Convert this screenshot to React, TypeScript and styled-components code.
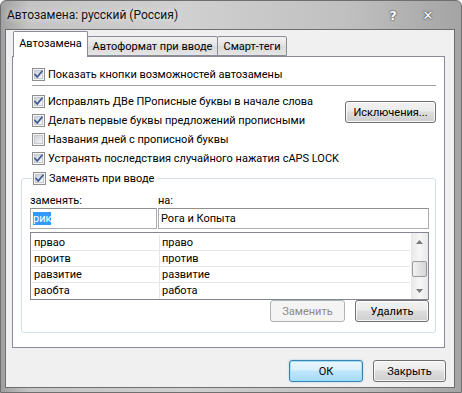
import React from "react";
import styled, { createGlobalStyle, css } from "styled-components";

const GlobalStyle = createGlobalStyle`
  html, body {
    margin: 0;
    padding: 0;
    background: #ffffff;
  }
  body {
    font-family: Roboto, "Noto Sans", "Liberation Sans", sans-serif;
    font-size: 11px;
    color: #000;
  }
`;

const Window = styled.div`
  width: 462px;
  height: 393px;
  box-sizing: border-box;
  display: flex;
  flex-direction: column;
  background: linear-gradient(90deg, #a0a0a0 0%, #c4c4c4 6%, #d0d0d0 40%, #c0c0c0 75%, #a4a4a4 100%);
  border: 1px solid #6f6f6f;
  border-radius: 6px 6px 0 0;
`;

const TitleBar = styled.div`
  height: 28px;
  display: flex;
  align-items: center;
  padding-left: 6px;
  padding-right: 10px;
`;

const TitleText = styled.div`
  flex: 1;
  font-size: 12px;
  color: #111;
  text-shadow: 0 0 6px rgba(255, 255, 255, 0.9);
`;

const TitleButton = styled.div<{ $w: number }>`
  width: ${(p) => p.$w}px;
  text-align: center;
  color: #fff;
  font-family: "DejaVu Sans", sans-serif;
  font-weight: bold;
  font-size: 13px;
  text-shadow: 0 0 2px #444, 0 0 1px #222;
`;

const Client = styled.div`
  flex: 1;
  margin: 0 6px 4px 4px;
  background: #f0f0f0;
  border: 1px solid #6e6e6e;
  display: flex;
  flex-direction: column;
  padding: 1px 9px 0 6px;
`;

const TabRow = styled.div`
  display: flex;
  align-items: flex-end;
  height: 25px;
  padding-left: 1px;
`;

const Tab = styled.div<{ $active?: boolean }>`
  box-sizing: border-box;
  border: 1px solid #898c95;
  border-radius: 2px 2px 0 0;
  display: flex;
  align-items: center;
  justify-content: center;
  white-space: nowrap;
  ${(p) =>
    p.$active
      ? css`
          height: 26px;
          margin-bottom: -1px;
          background: #ffffff;
          border-bottom: none;
          position: relative;
          z-index: 1;
          padding-bottom: 2px;
        `
      : css`
          height: 20px;
          margin-left: -1px;
          background: linear-gradient(#f2f2f2, #e3e3e3 50%, #d9d9d9 51%, #e5e5e5);
        `}
`;

const Panel = styled.div`
  height: 292px;
  box-sizing: border-box;
  background: #ffffff;
  border: 1px solid #898c95;
  padding: 9px 8px 0 8px;
  display: flex;
  flex-direction: column;
`;

const CheckRow = styled.label<{ $h?: number }>`
  display: flex;
  align-items: center;
  gap: 3px;
  height: ${(p) => p.$h ?? 19}px;
  padding-left: 11px;
  white-space: nowrap;
`;

const Separator = styled.div`
  height: 1px;
  background: #a0a0a0;
  border-bottom: 1px solid #ffffff;
  margin: 2px 0 5px 11px;
`;

const TopBlock = styled.div`
  display: flex;
  justify-content: space-between;
`;

const CheckColumn = styled.div`
  display: flex;
  flex-direction: column;
`;

const Button = styled.button<{ $w: number; $default?: boolean }>`
  width: ${(p) => p.$w}px;
  height: 22px;
  box-sizing: border-box;
  font-family: inherit;
  font-size: 11px;
  color: #000;
  border: 1px solid #707070;
  border-radius: 3px;
  padding: 0;
  background: linear-gradient(#f2f2f2 0%, #ebebeb 45%, #dddddd 50%, #cfcfcf 100%);
  box-shadow: inset 0 0 0 1px rgba(255, 255, 255, 0.8);
  ${(p) =>
    p.$default &&
    css`
      border-color: #3c7fb1;
      background: linear-gradient(#eaf6fd 0%, #d9f0fc 45%, #bee6fd 50%, #a7d9f5 100%);
      box-shadow: inset 0 0 0 1px #98e1f6, 0 0 2px #9ccbe6;
    `}
  &:disabled {
    color: #8a8a8a;
    border-color: #adb2b5;
    background: #f4f4f4;
    box-shadow: none;
  }
`;

const ExceptionsButton = styled(Button)`
  margin-top: 9px;
`;

const Group = styled.fieldset`
  margin: 2px 0 0 0;
  padding: 0 6px 4px 8px;
  border: 1px solid #d5dfe5;
  border-radius: 3px;
  height: 163px;
  box-sizing: border-box;
  display: flex;
  flex-direction: column;
`;

const Legend = styled.legend`
  padding: 0 3px 0 1px;
  margin-left: 2px;
`;

const LegendRow = styled.label`
  display: flex;
  align-items: center;
  gap: 3px;
  height: 17px;
  white-space: nowrap;
`;

const FieldGrid = styled.div`
  display: grid;
  grid-template-columns: 127px 1fr;
  column-gap: 1px;
  margin-top: 6px;
`;

const FieldLabel = styled.div`
  height: 15px;
  line-height: 15px;
`;

const Input = styled.div`
  height: 21px;
  box-sizing: border-box;
  border: 1px solid #abadb3;
  border-top-color: #8e8f8f;
  background: #fff;
  display: flex;
  align-items: center;
  padding-left: 2px;
`;

const Selected = styled.span`
  background: #3399ff;
  color: #fff;
`;

const List = styled.div`
  margin-top: 3px;
  height: 68px;
  box-sizing: border-box;
  border: 1px solid #828790;
  display: flex;
  background: #fff;
`;

const ListBody = styled.div`
  flex: 1;
  padding: 2px 1px 0 1px;
`;

const ListRow = styled.div<{ $last?: boolean }>`
  display: grid;
  grid-template-columns: 128px 1fr;
  height: 16px;
  box-sizing: border-box;
  border-bottom: ${(p) => (p.$last ? "none" : "1px solid #e6e6e6")};
`;

const Cell = styled.div<{ $divider?: boolean }>`
  padding-left: 2px;
  line-height: 15px;
  border-right: ${(p) => (p.$divider ? "1px solid #e6e6e6" : "none")};
`;

const ScrollBar = styled.div`
  width: 17px;
  display: flex;
  flex-direction: column;
  align-items: center;
  background: linear-gradient(90deg, #e8e8e8, #f6f6f6 50%, #e8e8e8);
`;

const ScrollArrow = styled.div`
  height: 17px;
  width: 17px;
  display: flex;
  align-items: center;
  justify-content: center;
`;

const ScrollThumb = styled.div`
  width: 15px;
  height: 16px;
  box-sizing: border-box;
  margin-top: 11px;
  margin-bottom: auto;
  border: 1px solid #9a9a9a;
  border-radius: 2px;
  background: linear-gradient(90deg, #f3f3f3, #e2e2e2 50%, #d6d6d6);
`;

const GroupButtons = styled.div`
  margin-top: auto;
  display: flex;
  justify-content: flex-end;
  gap: 10px;
`;

const Footer = styled.div`
  display: flex;
  justify-content: flex-end;
  gap: 10px;
  margin-top: 12px;
  margin-right: -1px;
`;

const CheckBox: React.FC<{ checked?: boolean }> = ({ checked }) => (
  <svg width="13" height="13" viewBox="0 0 13 13">
    <defs>
      <linearGradient id="cbfill" x1="0" y1="0" x2="1" y2="1">
        <stop offset="0" stopColor="#cbcfd5" />
        <stop offset="1" stopColor="#f7f7f7" />
      </linearGradient>
    </defs>
    <rect x="0.5" y="0.5" width="12" height="12" fill="#f4f4f4" stroke="#8f8f8f" />
    <rect x="2.5" y="2.5" width="8" height="8" fill="url(#cbfill)" stroke="#c6c9ce" />
    {checked && (
      <path
        d="M3 6.5 L5.2 9 L10 3.2"
        fill="none"
        stroke="#3c5a96"
        strokeWidth="1.8"
        strokeLinecap="round"
        strokeLinejoin="round"
      />
    )}
  </svg>
);

const Arrow: React.FC<{ up?: boolean }> = ({ up }) => (
  <svg width="7" height="4" viewBox="0 0 7 4">
    <path d={up ? "M0 4 L3.5 0 L7 4 Z" : "M0 0 L3.5 4 L7 0 Z"} fill="#7a7a7a" />
  </svg>
);

const entries = [
  ["првао", "право"],
  ["проитв", "против"],
  ["равзитие", "развитие"],
  ["раобта", "работа"],
];

const tabs = [
  { label: "Автозамена", width: 75, active: true },
  { label: "Автоформат при вводе", width: 131 },
  { label: "Смарт-теги", width: 70 },
];

const App: React.FC = () => {
  return (
    <>
      <GlobalStyle />
      <Window>
        <TitleBar>
          <TitleText>Автозамена: русский (Россия)</TitleText>
          <TitleButton $w={24}>?</TitleButton>
          <TitleButton $w={46}>✕</TitleButton>
        </TitleBar>
        <Client>
          <TabRow>
            {tabs.map((t) => (
              <Tab key={t.label} $active={t.active} style={{ width: t.width }}>
                {t.label}
              </Tab>
            ))}
          </TabRow>
          <Panel>
            <CheckRow $h={17}>
              <CheckBox checked />
              Показать кнопки возможностей автозамены
            </CheckRow>
            <Separator />
            <TopBlock>
              <CheckColumn>
                <CheckRow>
                  <CheckBox checked />
                  Исправлять ДВе ПРописные буквы в начале слова
                </CheckRow>
                <CheckRow>
                  <CheckBox checked />
                  Делать первые буквы предложений прописными
                </CheckRow>
              </CheckColumn>
              <ExceptionsButton $w={91}>Исключения...</ExceptionsButton>
            </TopBlock>
            <CheckRow>
              <CheckBox />
              Названия дней с прописной буквы
            </CheckRow>
            <CheckRow>
              <CheckBox checked />
              Устранять последствия случайного нажатия cAPS LOCK
            </CheckRow>
            <Group>
              <Legend>
                <LegendRow>
                  <CheckBox checked />
                  Заменять при вводе
                </LegendRow>
              </Legend>
              <FieldGrid>
                <FieldLabel>заменять:</FieldLabel>
                <FieldLabel>на:</FieldLabel>
                <Input>
                  <Selected>рик</Selected>
                </Input>
                <Input>Рога и Копыта</Input>
              </FieldGrid>
              <List>
                <ListBody>
                  {entries.map(([from, to], i) => (
                    <ListRow key={from} $last={i === entries.length - 1}>
                      <Cell $divider>{from}</Cell>
                      <Cell>{to}</Cell>
                    </ListRow>
                  ))}
                </ListBody>
                <ScrollBar>
                  <ScrollArrow>
                    <Arrow up />
                  </ScrollArrow>
                  <ScrollThumb />
                  <ScrollArrow>
                    <Arrow />
                  </ScrollArrow>
                </ScrollBar>
              </List>
              <GroupButtons>
                <Button $w={75} disabled>
                  Заменить
                </Button>
                <Button $w={74}>Удалить</Button>
              </GroupButtons>
            </Group>
          </Panel>
          <Footer>
            <Button $w={74} $default>
              ОК
            </Button>
            <Button $w={73}>Закрыть</Button>
          </Footer>
        </Client>
      </Window>
    </>
  );
};

export default App;
